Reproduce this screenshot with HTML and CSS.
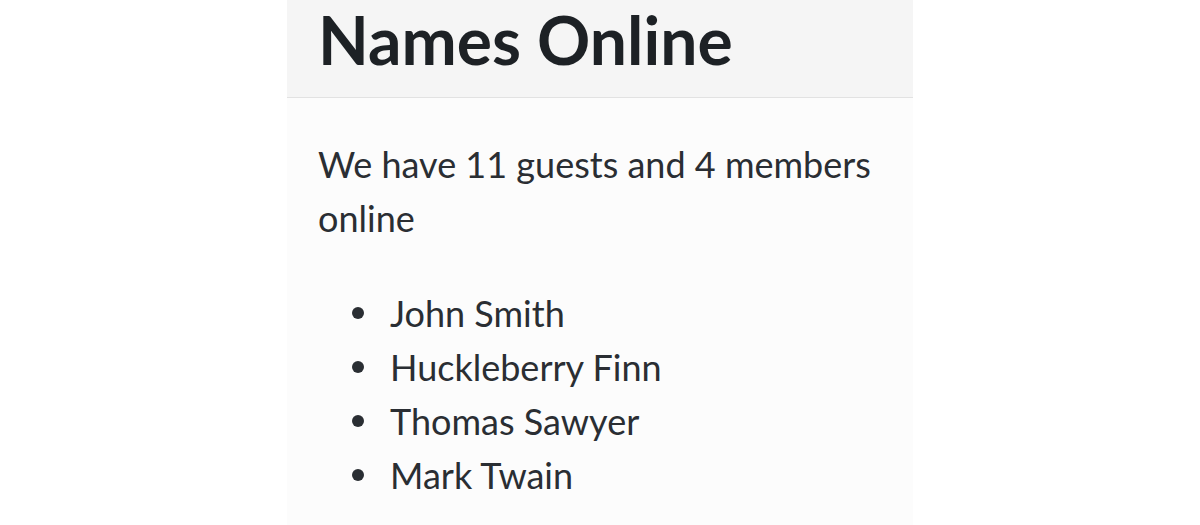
FILE: index.html
```html
<!DOCTYPE html>
<html lang="en">
<head>
    <meta charset="UTF-8">
    <title>Names Online</title>
    <link rel="stylesheet" href="styles.css">
</head>
<body>
    <div class="card">
        <div class="card-header">
            <h1>Names Online</h1>
        </div>
        <div class="card-body">
            <p>We have 11 guests and 4 members online</p>
            <ul class="names">
                <li>John Smith</li>
                <li>Huckleberry Finn</li>
                <li>Thomas Sawyer</li>
                <li>Mark Twain</li>
            </ul>
        </div>
    </div>
</body>
</html>
```

FILE: styles.css
```css
body {
    margin: 0;
    padding: 0;
    background: #ffffff;
    font-family: Lato, sans-serif;
    color: #2a2e33;
}
.card {
    width: 626px;
    height: 100vh;
    margin: 0 auto;
    background: #fcfcfc;
}
.card-header {
    background: #f5f5f5;
    border-bottom: 1px solid #e2e2e2;
    padding: 0 31px 17px;
}
.card-header h1 {
    margin: 0;
    font-size: 66px;
    line-height: 80px;
    font-weight: 700;
    color: #1d2125;
}
.card-body {
    padding: 39px 31px 0;
    font-size: 36px;
    line-height: 54px;
}
.card-body p {
    margin: 0 0 41px;
}
.names {
    margin: 0;
    padding-left: 72px;
    list-style: none;
}
.names li::before {
    content: "";
    display: inline-block;
    width: 12px;
    height: 12px;
    margin-left: -38px;
    margin-right: 26px;
    border-radius: 50%;
    background: #2a2e33;
    vertical-align: 8px;
}
```
